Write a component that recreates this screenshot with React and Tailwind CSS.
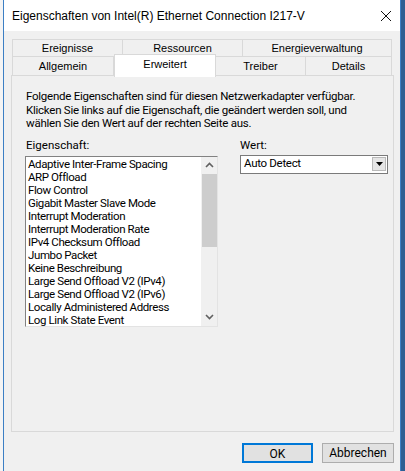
import { useState } from "react";

const properties = [
    "Adaptive Inter-Frame Spacing",
    "ARP Offload",
    "Flow Control",
    "Gigabit Master Slave Mode",
    "Interrupt Moderation",
    "Interrupt Moderation Rate",
    "IPv4 Checksum Offload",
    "Jumbo Packet",
    "Keine Beschreibung",
    "Large Send Offload V2 (IPv4)",
    "Large Send Offload V2 (IPv6)",
    "Locally Administered Address",
    "Log Link State Event",
];

function Chevron({ down }) {
    return (
        <svg width="9" height="6" viewBox="0 0 9 6" className="block">
            <path
                d={down ? "M1 1 L4.5 4.5 L8 1" : "M1 5 L4.5 1.5 L8 5"}
                fill="none"
                stroke="#606060"
                strokeWidth="1.6"
            />
        </svg>
    );
}

function Tab({ label, className = "" }) {
    return (
        <div
            className={
                "flex items-center justify-center border-r border-t border-[#d9d9d9] bg-[#f0f0f0] " +
                className
            }
        >
            {label}
        </div>
    );
}

export default function App() {
    const [selected] = useState(-1);

    return (
        <div
            className="w-[405px] h-[471px] flex overflow-hidden text-[11px] text-black"
            style={{ fontFamily: '"Liberation Sans", Arial, sans-serif' }}
        >
            {/* desktop peeking in on the left */}
            <div className="w-[3px] bg-[#f4f4f4]"></div>

            <div className="w-[398px] flex flex-col border-l border-r border-[#3c7fc4] bg-[#f0f0f0]">
                {/* title bar */}
                <div className="h-[31px] bg-white flex items-center justify-between pl-[8px] pr-[8px]">
                    <span className="text-[12px]">
                        Eigenschaften von Intel(R) Ethernet Connection I217-V
                    </span>
                    <svg width="12" height="12" viewBox="0 0 12 12">
                        <path d="M1 1 L11 11 M11 1 L1 11" stroke="#111" strokeWidth="1" />
                    </svg>
                </div>

                {/* tabs */}
                <div className="mt-[8px] ml-[8px] w-[380px] flex flex-col">
                    <div className="flex h-[17px] border-l border-[#d9d9d9]">
                        <Tab label="Ereignisse" className="w-[110px]" />
                        <Tab label="Ressourcen" className="w-[120px]" />
                        <Tab label="Energieverwaltung" className="flex-1" />
                    </div>
                    <div className="flex h-[19px] border-l border-[#d9d9d9] relative">
                        <Tab label="Allgemein" className="w-[101px]" />
                        <div className="w-[102px] relative">
                            <div className="absolute left-0 right-0 top-[-2px] h-[23px] bg-white border border-b-0 border-[#d9d9d9] flex items-start justify-center pt-[1px] z-10">
                                Erweitert
                            </div>
                        </div>
                        <Tab label="Treiber" className="w-[90px]" />
                        <Tab label="Details" className="flex-1" />
                    </div>
                </div>

                {/* tab page */}
                <div
                    className="ml-[7px] w-[383px] h-[357px] border border-[#d9d9d9] bg-[#f0f0f0] flex flex-col pl-[14px] text-[11.5px]"
                    style={{ fontFamily: "Roboto, Arial, sans-serif" }}
                >
                    <p className="mt-[14px] leading-[13.5px] tracking-[-0.25px]">
                        Folgende Eigenschaften sind für diesen Netzwerkadapter verfügbar.
                        <br />
                        Klicken Sie links auf die Eigenschaft, die geändert werden soll, und
                        <br />
                        wählen Sie den Wert auf der rechten Seite aus.
                    </p>

                    <div className="flex mt-[8px]">
                        <div className="w-[214px] flex flex-col">
                            <span className="leading-[13px]">Eigenschaft:</span>
                            <div className="mt-[4px] ml-[-1px] w-[193px] h-[171px] flex border-t border-l border-[#828282] border-r border-b border-r-[#e3e3e3] border-b-[#e3e3e3] bg-white">
                                <ul className="flex-1 pt-[1px] pl-[2px] leading-[13px] tracking-[-0.4px] overflow-hidden">
                                    {properties.map((p, i) => (
                                        <li
                                            key={p}
                                            className={
                                                "whitespace-nowrap " +
                                                (i === selected ? "bg-[#0078d7] text-white" : "")
                                            }
                                        >
                                            {p}
                                        </li>
                                    ))}
                                </ul>
                                {/* vertical scrollbar */}
                                <div className="w-[16px] bg-[#f0f0f0] flex flex-col items-center">
                                    <div className="h-[17px] w-full flex items-center justify-center">
                                        <Chevron />
                                    </div>
                                    <div className="h-[73px] w-[15px] bg-[#cdcdcd]"></div>
                                    <div className="flex-1"></div>
                                    <div className="h-[17px] w-full flex items-center justify-center">
                                        <Chevron down />
                                    </div>
                                </div>
                            </div>
                        </div>

                        <div className="flex flex-col">
                            <span className="leading-[13px]">Wert:</span>
                            <div className="mt-[3px] w-[148px] h-[19px] flex items-center border border-[#7a7a7a] bg-white pl-[3px] pr-[1px]">
                                <span className="flex-1 tracking-[-0.3px]">Auto Detect</span>
                                <div className="w-[14px] h-[14px] bg-[#e5e5e5] border border-[#b9b9b9] flex items-center justify-center">
                                    <svg width="7" height="4" viewBox="0 0 7 4">
                                        <path d="M0 0 H7 L3.5 4 Z" fill="#000" />
                                    </svg>
                                </div>
                            </div>
                        </div>
                    </div>
                </div>

                {/* dialog buttons */}
                <div
                    className="flex justify-end gap-[9px] mt-[11px] pr-[6px] text-[12px]"
                    style={{ fontFamily: "Roboto, Arial, sans-serif" }}
                >
                    <button className="w-[71px] h-[20px] bg-[#e1e1e1] border-2 border-[#0078d7]">
                        OK
                    </button>
                    <button className="w-[72px] h-[20px] bg-[#e1e1e1] border border-[#adadad]">
                        Abbrechen
                    </button>
                </div>
            </div>

            {/* desktop on the right */}
            <div className="flex-1 bg-[#2d5f93]"></div>
        </div>
    );
}
